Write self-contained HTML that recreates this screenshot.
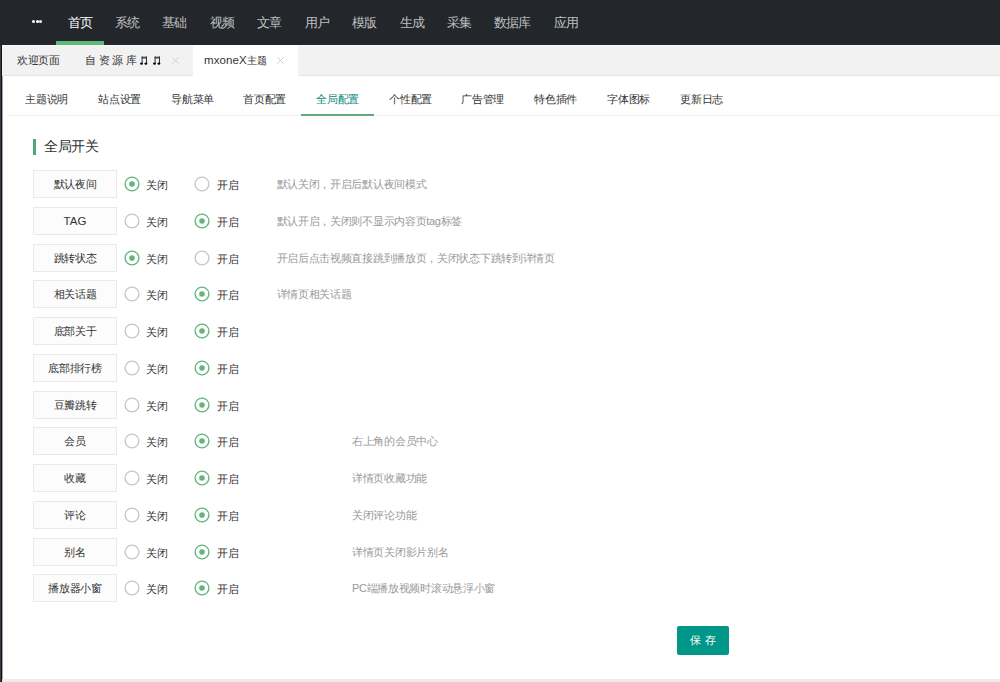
<!DOCTYPE html>
<html><head><meta charset="utf-8">
<style>
*{margin:0;padding:0;box-sizing:border-box}
html,body{width:1000px;height:682px;overflow:hidden;background:#fff;font-family:"Liberation Sans",sans-serif;color:#333}
.a{position:absolute;white-space:nowrap}
#hdr{position:absolute;left:0;top:0;width:1000px;height:45px;background:#23262B}
.nav{position:absolute;top:15px;font-size:13px;line-height:16px;letter-spacing:-1px;color:rgba(255,255,255,.72)}
.nav.on{color:#fff}
#bar{position:absolute;left:56px;top:41px;width:48px;height:4px;background:#5FB878}
.dot{position:absolute;top:20px;width:3px;height:3px;border-radius:50%;background:#fff}
#lside{position:absolute;left:0;top:45px;width:3px;height:637px;background:linear-gradient(to right,#3c3b45 0,#3c3b45 1px,#121118 1px,#121118 2px,#a5a5aa 2px,#a5a5aa 3px)}
#tabs{position:absolute;left:2px;top:45px;width:998px;height:31px;background:#f2f2f2;border-top:1px solid #fafafa;border-bottom:1px solid #e6e6e6}
#acttab{position:absolute;left:193px;top:45px;width:105px;height:32px;background:#fff}
.tt{position:absolute;top:53px;font-size:11px;line-height:14px;color:#333;letter-spacing:-0.3px}
.cls{position:absolute;top:56px;width:8px;height:8px}
.cls:before,.cls:after{content:"";position:absolute;left:3.5px;top:-1px;width:1px;height:10px;background:#c8c8c8}
.cls:before{transform:rotate(45deg)}
.cls:after{transform:rotate(-45deg)}
#subline{position:absolute;left:8px;top:115px;width:992px;height:1px;background:#eee}
.st{position:absolute;top:92px;font-size:11px;line-height:14px;color:#333;letter-spacing:-0.2px}
.st.on{color:#0a8a7d}
#subbar{position:absolute;left:301px;top:114px;width:73px;height:2px;background:#62a981}
#ttlbar{position:absolute;left:33px;top:139px;width:3px;height:16px;background:#55a57b}
#ttl{position:absolute;left:44px;top:138px;font-size:14px;line-height:17px;letter-spacing:-0.4px;color:#333}
.lb{position:absolute;left:33px;width:84px;height:28px;background:#fcfcfc;border:1px solid #e9e9e9;font-size:11px;line-height:26px;text-align:center;letter-spacing:-0.3px;color:#333}
.rd{position:absolute;width:16px;height:16px;border-radius:50%;border:1.5px solid #c9c9c9;background:#fff}
.rd.on{border-color:#5FB878}
.rd.on:after{content:"";position:absolute;left:3.5px;top:3.5px;width:6px;height:6px;border-radius:50%;background:#5FB878}
.rt{position:absolute;font-size:11px;line-height:14px;color:#333;letter-spacing:-0.3px}
.ds{position:absolute;font-size:11px;line-height:14px;color:#999;letter-spacing:-0.3px}
#save{position:absolute;left:677px;top:626px;width:52px;height:29px;background:#009688;border-radius:2px;color:#fff;font-size:11px;line-height:29px;text-align:center}
#foot{position:absolute;left:2px;top:679px;width:998px;height:3px;background:#ebebeb}
</style></head><body>
<div id="hdr"></div>
<div class="dot" style="left:32px"></div><div class="dot" style="left:35.5px"></div><div class="dot" style="left:39px"></div>
<div class="a nav on" style="left:68px">首页</div>
<div class="a nav" style="left:115px">系统</div>
<div class="a nav" style="left:162px">基础</div>
<div class="a nav" style="left:210px">视频</div>
<div class="a nav" style="left:257px">文章</div>
<div class="a nav" style="left:305px">用户</div>
<div class="a nav" style="left:352px">模版</div>
<div class="a nav" style="left:400px">生成</div>
<div class="a nav" style="left:447px">采集</div>
<div class="a nav" style="left:494px">数据库</div>
<div class="a nav" style="left:554px">应用</div>
<div id="bar"></div>
<div id="lside"></div>
<div id="tabs"></div>
<div id="acttab"></div>
<div class="a tt" style="left:17px">欢迎页面</div>
<div class="a tt" style="left:85px;letter-spacing:-0.25px">自 资 源 库</div>
<svg class="a" style="left:140px;top:55.5px" width="8" height="9" viewBox="0 0 8 9"><path d="M1.6 0.6H7V2.6H1.6Z" fill="#555"/><rect x="1.6" y="0.6" width="1" height="7" fill="#333"/><rect x="6" y="0.6" width="1" height="7" fill="#333"/><ellipse cx="1.5" cy="7.6" rx="1.4" ry="1.2" fill="#000"/><ellipse cx="5.9" cy="7.6" rx="1.4" ry="1.2" fill="#000"/></svg>
<svg class="a" style="left:153px;top:55.5px" width="8" height="9" viewBox="0 0 8 9"><path d="M1.6 0.6H7V2.6H1.6Z" fill="#555"/><rect x="1.6" y="0.6" width="1" height="7" fill="#333"/><rect x="6" y="0.6" width="1" height="7" fill="#333"/><ellipse cx="1.5" cy="7.6" rx="1.4" ry="1.2" fill="#000"/><ellipse cx="5.9" cy="7.6" rx="1.4" ry="1.2" fill="#000"/></svg>
<svg class="a" style="left:172px;top:57px" width="7" height="7" viewBox="0 0 7 7"><path d="M0.3 0.3L6.7 6.7M6.7 0.3L0.3 6.7" stroke="#cfcfcf" stroke-width="1"/></svg>
<div class="a tt" style="left:204px;font-size:11.5px;letter-spacing:0.1px">mxoneX<span style="font-size:10px;letter-spacing:0.6px;position:relative;top:-0.5px">主题</span></div>
<svg class="a" style="left:277px;top:57px" width="7" height="7" viewBox="0 0 7 7"><path d="M0.3 0.3L6.7 6.7M6.7 0.3L0.3 6.7" stroke="#cfcfcf" stroke-width="1"/></svg>

<div id="subline"></div>
<div class="a st" style="left:25px">主题说明</div>
<div class="a st" style="left:98px">站点设置</div>
<div class="a st" style="left:171px">导航菜单</div>
<div class="a st" style="left:243px">首页配置</div>
<div class="a st on" style="left:316px">全局配置</div>
<div class="a st" style="left:389px">个性配置</div>
<div class="a st" style="left:461px">广告管理</div>
<div class="a st" style="left:534px">特色插件</div>
<div class="a st" style="left:607px">字体图标</div>
<div class="a st" style="left:680px">更新日志</div>
<div id="subbar"></div>

<div id="ttlbar"></div>
<div id="ttl" class="a">全局开关</div>

<!--ROWS-->
<div class="lb" style="top:170.20px"><span>默认夜间</span></div>
<svg class="a" style="left:123.90px;top:176.05px" width="16" height="16" viewBox="0 0 16 16"><circle cx="8" cy="8" r="6.9" fill="#fff" stroke="#62b47f" stroke-width="1.35"/><circle cx="8" cy="8" r="2.8" fill="#5FB878"/></svg>
<div class="a rt" style="left:146px;top:178.00px">关闭</div>
<svg class="a" style="left:194.40px;top:176.05px" width="16" height="16" viewBox="0 0 16 16"><circle cx="8" cy="8" r="6.9" fill="#fff" stroke="#c6c6c6" stroke-width="1.35"/></svg>
<div class="a rt" style="left:217px;top:178.00px">开启</div>
<div class="a ds" style="left:276.5px;top:177.20px">默认关闭，开启后默认夜间模式</div>
<div class="lb" style="top:206.95px"><span style="font-size:11.5px;letter-spacing:0">TAG</span></div>
<svg class="a" style="left:123.90px;top:212.80px" width="16" height="16" viewBox="0 0 16 16"><circle cx="8" cy="8" r="6.9" fill="#fff" stroke="#c6c6c6" stroke-width="1.35"/></svg>
<div class="a rt" style="left:146px;top:214.75px">关闭</div>
<svg class="a" style="left:194.40px;top:212.80px" width="16" height="16" viewBox="0 0 16 16"><circle cx="8" cy="8" r="6.9" fill="#fff" stroke="#62b47f" stroke-width="1.35"/><circle cx="8" cy="8" r="2.8" fill="#5FB878"/></svg>
<div class="a rt" style="left:217px;top:214.75px">开启</div>
<div class="a ds" style="left:276.5px;top:213.95px">默认开启，关闭则不显示内容页tag标签</div>
<div class="lb" style="top:243.70px"><span>跳转状态</span></div>
<svg class="a" style="left:123.90px;top:249.55px" width="16" height="16" viewBox="0 0 16 16"><circle cx="8" cy="8" r="6.9" fill="#fff" stroke="#62b47f" stroke-width="1.35"/><circle cx="8" cy="8" r="2.8" fill="#5FB878"/></svg>
<div class="a rt" style="left:146px;top:251.50px">关闭</div>
<svg class="a" style="left:194.40px;top:249.55px" width="16" height="16" viewBox="0 0 16 16"><circle cx="8" cy="8" r="6.9" fill="#fff" stroke="#c6c6c6" stroke-width="1.35"/></svg>
<div class="a rt" style="left:217px;top:251.50px">开启</div>
<div class="a ds" style="left:276.5px;top:250.70px">开启后点击视频直接跳到播放页，关闭状态下跳转到详情页</div>
<div class="lb" style="top:280.45px"><span>相关话题</span></div>
<svg class="a" style="left:123.90px;top:286.30px" width="16" height="16" viewBox="0 0 16 16"><circle cx="8" cy="8" r="6.9" fill="#fff" stroke="#c6c6c6" stroke-width="1.35"/></svg>
<div class="a rt" style="left:146px;top:288.25px">关闭</div>
<svg class="a" style="left:194.40px;top:286.30px" width="16" height="16" viewBox="0 0 16 16"><circle cx="8" cy="8" r="6.9" fill="#fff" stroke="#62b47f" stroke-width="1.35"/><circle cx="8" cy="8" r="2.8" fill="#5FB878"/></svg>
<div class="a rt" style="left:217px;top:288.25px">开启</div>
<div class="a ds" style="left:276.5px;top:287.45px">详情页相关话题</div>
<div class="lb" style="top:317.20px"><span>底部关于</span></div>
<svg class="a" style="left:123.90px;top:323.05px" width="16" height="16" viewBox="0 0 16 16"><circle cx="8" cy="8" r="6.9" fill="#fff" stroke="#c6c6c6" stroke-width="1.35"/></svg>
<div class="a rt" style="left:146px;top:325.00px">关闭</div>
<svg class="a" style="left:194.40px;top:323.05px" width="16" height="16" viewBox="0 0 16 16"><circle cx="8" cy="8" r="6.9" fill="#fff" stroke="#62b47f" stroke-width="1.35"/><circle cx="8" cy="8" r="2.8" fill="#5FB878"/></svg>
<div class="a rt" style="left:217px;top:325.00px">开启</div>
<div class="lb" style="top:353.95px"><span>底部排行榜</span></div>
<svg class="a" style="left:123.90px;top:359.80px" width="16" height="16" viewBox="0 0 16 16"><circle cx="8" cy="8" r="6.9" fill="#fff" stroke="#c6c6c6" stroke-width="1.35"/></svg>
<div class="a rt" style="left:146px;top:361.75px">关闭</div>
<svg class="a" style="left:194.40px;top:359.80px" width="16" height="16" viewBox="0 0 16 16"><circle cx="8" cy="8" r="6.9" fill="#fff" stroke="#62b47f" stroke-width="1.35"/><circle cx="8" cy="8" r="2.8" fill="#5FB878"/></svg>
<div class="a rt" style="left:217px;top:361.75px">开启</div>
<div class="lb" style="top:390.70px"><span>豆瓣跳转</span></div>
<svg class="a" style="left:123.90px;top:396.55px" width="16" height="16" viewBox="0 0 16 16"><circle cx="8" cy="8" r="6.9" fill="#fff" stroke="#c6c6c6" stroke-width="1.35"/></svg>
<div class="a rt" style="left:146px;top:398.50px">关闭</div>
<svg class="a" style="left:194.40px;top:396.55px" width="16" height="16" viewBox="0 0 16 16"><circle cx="8" cy="8" r="6.9" fill="#fff" stroke="#62b47f" stroke-width="1.35"/><circle cx="8" cy="8" r="2.8" fill="#5FB878"/></svg>
<div class="a rt" style="left:217px;top:398.50px">开启</div>
<div class="lb" style="top:427.45px"><span>会员</span></div>
<svg class="a" style="left:123.90px;top:433.30px" width="16" height="16" viewBox="0 0 16 16"><circle cx="8" cy="8" r="6.9" fill="#fff" stroke="#c6c6c6" stroke-width="1.35"/></svg>
<div class="a rt" style="left:146px;top:435.25px">关闭</div>
<svg class="a" style="left:194.40px;top:433.30px" width="16" height="16" viewBox="0 0 16 16"><circle cx="8" cy="8" r="6.9" fill="#fff" stroke="#62b47f" stroke-width="1.35"/><circle cx="8" cy="8" r="2.8" fill="#5FB878"/></svg>
<div class="a rt" style="left:217px;top:435.25px">开启</div>
<div class="a ds" style="left:352px;top:434.45px">右上角的会员中心</div>
<div class="lb" style="top:464.20px"><span>收藏</span></div>
<svg class="a" style="left:123.90px;top:470.05px" width="16" height="16" viewBox="0 0 16 16"><circle cx="8" cy="8" r="6.9" fill="#fff" stroke="#c6c6c6" stroke-width="1.35"/></svg>
<div class="a rt" style="left:146px;top:472.00px">关闭</div>
<svg class="a" style="left:194.40px;top:470.05px" width="16" height="16" viewBox="0 0 16 16"><circle cx="8" cy="8" r="6.9" fill="#fff" stroke="#62b47f" stroke-width="1.35"/><circle cx="8" cy="8" r="2.8" fill="#5FB878"/></svg>
<div class="a rt" style="left:217px;top:472.00px">开启</div>
<div class="a ds" style="left:352px;top:471.20px">详情页收藏功能</div>
<div class="lb" style="top:500.95px"><span>评论</span></div>
<svg class="a" style="left:123.90px;top:506.80px" width="16" height="16" viewBox="0 0 16 16"><circle cx="8" cy="8" r="6.9" fill="#fff" stroke="#c6c6c6" stroke-width="1.35"/></svg>
<div class="a rt" style="left:146px;top:508.75px">关闭</div>
<svg class="a" style="left:194.40px;top:506.80px" width="16" height="16" viewBox="0 0 16 16"><circle cx="8" cy="8" r="6.9" fill="#fff" stroke="#62b47f" stroke-width="1.35"/><circle cx="8" cy="8" r="2.8" fill="#5FB878"/></svg>
<div class="a rt" style="left:217px;top:508.75px">开启</div>
<div class="a ds" style="left:352px;top:507.95px">关闭评论功能</div>
<div class="lb" style="top:537.70px"><span>别名</span></div>
<svg class="a" style="left:123.90px;top:543.55px" width="16" height="16" viewBox="0 0 16 16"><circle cx="8" cy="8" r="6.9" fill="#fff" stroke="#c6c6c6" stroke-width="1.35"/></svg>
<div class="a rt" style="left:146px;top:545.50px">关闭</div>
<svg class="a" style="left:194.40px;top:543.55px" width="16" height="16" viewBox="0 0 16 16"><circle cx="8" cy="8" r="6.9" fill="#fff" stroke="#62b47f" stroke-width="1.35"/><circle cx="8" cy="8" r="2.8" fill="#5FB878"/></svg>
<div class="a rt" style="left:217px;top:545.50px">开启</div>
<div class="a ds" style="left:352px;top:544.70px">详情页关闭影片别名</div>
<div class="lb" style="top:574.45px"><span>播放器小窗</span></div>
<svg class="a" style="left:123.90px;top:580.30px" width="16" height="16" viewBox="0 0 16 16"><circle cx="8" cy="8" r="6.9" fill="#fff" stroke="#c6c6c6" stroke-width="1.35"/></svg>
<div class="a rt" style="left:146px;top:582.25px">关闭</div>
<svg class="a" style="left:194.40px;top:580.30px" width="16" height="16" viewBox="0 0 16 16"><circle cx="8" cy="8" r="6.9" fill="#fff" stroke="#62b47f" stroke-width="1.35"/><circle cx="8" cy="8" r="2.8" fill="#5FB878"/></svg>
<div class="a rt" style="left:217px;top:582.25px">开启</div>
<div class="a ds" style="left:352px;top:581.45px">PC端播放视频时滚动悬浮小窗</div>
<!--/ROWS-->
<div id="save">保 存</div>
<div id="foot"></div>
</body></html>
